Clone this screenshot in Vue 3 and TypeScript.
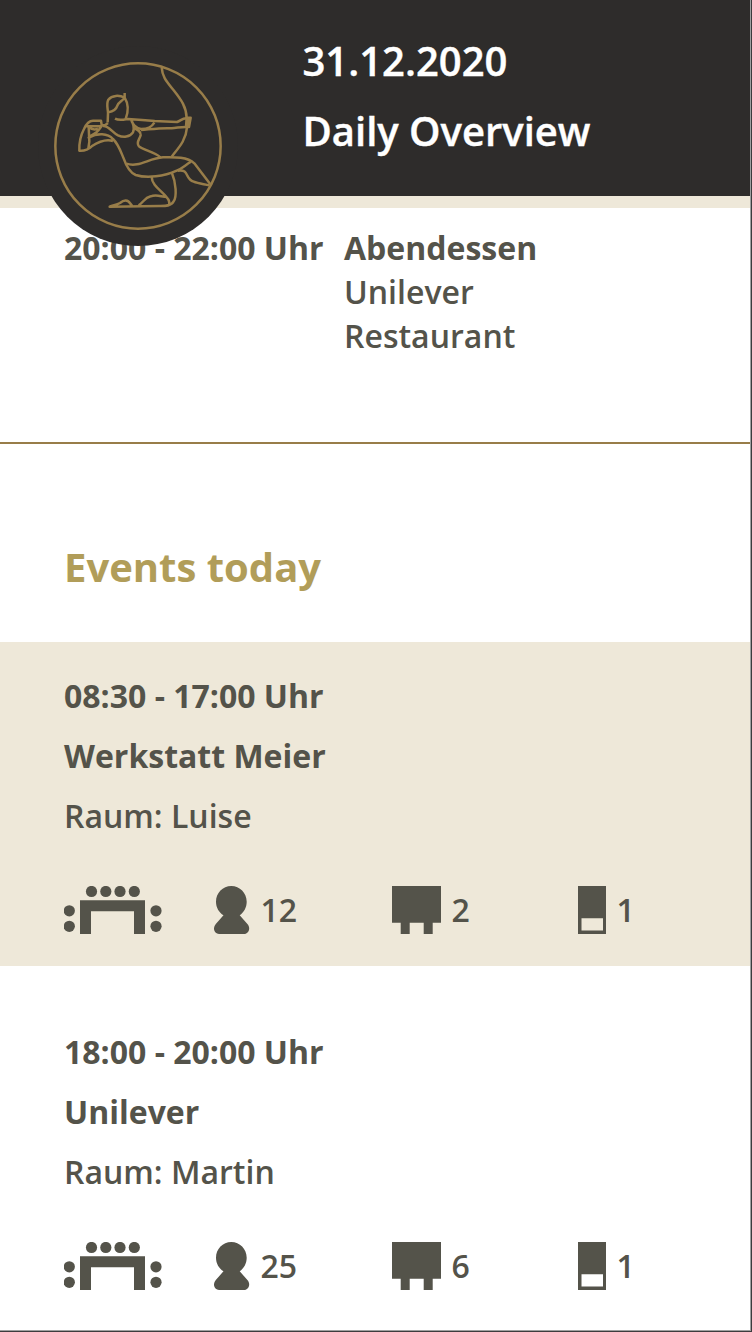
<script setup lang="ts">
interface EventItem {
  time: string
  title: string
  room: string
  people: number
  boards: number
  flipcharts: number
  tinted: boolean
}

const events: EventItem[] = [
  { time: '08:30 - 17:00 Uhr', title: 'Werkstatt Meier', room: 'Luise', people: 12, boards: 2, flipcharts: 1, tinted: true },
  { time: '18:00 - 20:00 Uhr', title: 'Unilever', room: 'Martin', people: 25, boards: 6, flipcharts: 1, tinted: false },
]
</script>

<template>
  <div class="page">
    <header class="header">
      <h1>31.12.2020</h1>
      <h1>Daily Overview</h1>
      <svg class="badge" viewBox="-6 -12 600 600">
        <circle class="disc" cx="294" cy="288" r="300" />
        <g class="lines">
          <circle cx="294" cy="288" r="248" />
          <!-- bow -->
          <path d="M365 52C367 80 378 92 401 121C424 150 439 171 440 204M441 232C438 270 418 291 395 320" />
          <path d="M440 203L452 203L447 231L438 231ZM446 203L442 231" />
          <!-- head -->
          <path d="M254 129L254 143C238 135 216 135 205 149C198 162 204 177 204 190L203 217M254 144C244 155 235 157 232 167C228 181 216 185 205 187M254 143C267 164 265 186 257 207" />
          <!-- arms -->
          <path d="M225 206C238 213 251 209 264 207L306 210L344 213L411 216C424 211 426 205 439 205M273 208C276 222 288 235 303 237C323 237 334 233 343 218M303 240C330 238 364 233 395 235C412 234 426 229 444 231M273 208C282 224 284 235 279 247C269 262 250 263 234 256C215 246 207 227 189 228" />
          <!-- cape -->
          <path d="M204 219L195 226L185 225L183 212L159 212C146 212 138 223 132 237C122 256 117 276 118 302C133 303 146 298 155 289C176 275 198 266 219 273M136 229L185 228L176 240C167 252 159 251 146 263C172 248 203 249 219 267C235 282 242 304 250 323C259 349 269 368 287 375C321 386 373 379 410 362C426 356 436 345 453 335M146 229L148 275L145 295M149 233C155 239 161 240 174 237" />
          <!-- torso and skirt -->
          <path d="M281 234C294 238 303 247 302 255C300 267 286 277 297 289C310 301 342 304 361 322M259 341C298 353 325 325 369 322C407 321 442 321 463 340L511 403" />
          <!-- legs -->
          <path d="M335 381C336 408 365 422 380 442C388 450 389 458 387 466M396 370C408 398 411 440 401 454C394 469 374 468 358 468L209 470C219 465 229 466 240 459C252 449 264 449 271 461L276 467M296 466C311 456 314 443 332 439C351 432 364 441 381 441M413 362C450 357 433 386 461 395C475 401 491 402 508 406" />
        </g>
      </svg>
    </header>

    <section class="meal">
      <div class="meal-time">20:00 - 22:00 Uhr</div>
      <div>
        <div class="strong">Abendessen</div>
        <div>Unilever</div>
        <div>Restaurant</div>
      </div>
    </section>

    <main>
      <h2>Events today</h2>
      <article v-for="event in events" :key="event.time" class="event" :class="{ tinted: event.tinted }">
        <div class="strong">{{ event.time }}</div>
        <div class="strong">{{ event.title }}</div>
        <div>Raum: {{ event.room }}</div>
        <div class="facts">
          <svg class="seating" width="98" height="48" viewBox="0 0 98 48">
            <circle v-for="x in [27.5, 41.8, 56, 70.3]" :key="x" :cx="x" cy="5.5" r="5.6" />
            <circle cx="5.3" cy="24.8" r="5.6" />
            <circle cx="5.3" cy="40.3" r="5.6" />
            <circle cx="92" cy="24.8" r="5.6" />
            <circle cx="92" cy="40.3" r="5.6" />
            <path d="M16 14.3H81V48H70V25.2H27V48H16Z" />
          </svg>
          <div class="fact people">
            <svg width="36" height="48" viewBox="0 0 36 48">
              <path d="M17.3 0C25.8 0 32.7 7 32.7 15.8C32.7 21.5 29.8 26.7 25.7 29.3L33.4 38C37 42 34.8 48 30 48H5C.2 48-1.8 42 1.8 38L9.5 29.3C5 26.7 2 21.5 2 15.8C2 7 8.8 0 17.3 0Z" />
            </svg>
            <span>{{ event.people }}</span>
          </div>
          <div class="fact boards">
            <svg width="49" height="48" viewBox="0 0 49 48">
              <path d="M0 0H49V36.7H40.7V48H31.7V36.7H17.7V48H8.7V36.7H0Z" />
            </svg>
            <span>{{ event.boards }}</span>
          </div>
          <div class="fact">
            <svg width="28" height="48" viewBox="0 0 28 48">
              <path fill-rule="evenodd" d="M0 0H28V48H0ZM3.5 32.3V44.5H25V32.3Z" />
            </svg>
            <span>{{ event.flipcharts }}</span>
          </div>
        </div>
      </article>
    </main>
  </div>
</template>

<style>
body {
  margin: 0;
}
</style>

<style scoped>
.page {
  position: relative;
  box-sizing: border-box;
  width: 752px;
  height: 1332px;
  overflow: hidden;
  background: #fff;
  color: #54534a;
  font: 600 32px/60px "Open Sans", "Noto Sans", sans-serif;
}
.page::after {
  content: "";
  position: absolute;
  inset: 0;
  border: solid #3d3c3e;
  border-width: 0 1px 1px 0;
  box-shadow: inset -1px -1px #a0a0a0;
}
.header {
  position: relative;
  box-sizing: border-box;
  height: 208px;
  padding: 26px 0 0 302.5px;
  border-bottom: 12px solid #eee8d9;
  background: #2e2c2b;
  color: #fff;
}
h1 {
  margin: 0;
  font-size: 40px;
  font-weight: 600;
  line-height: 70px;
  -webkit-text-stroke: 0.4px currentColor;
}
.badge {
  position: absolute;
  left: 38px;
  top: 46px;
  width: 200px;
  height: 200px;
}
.disc {
  fill: #2e2c2b;
}
.lines {
  fill: none;
  stroke: #987d49;
  stroke-width: 7.5;
  stroke-linejoin: round;
}
.meal {
  display: grid;
  grid-template-columns: 280px 1fr;
  box-sizing: border-box;
  height: 236px;
  padding: 18px 0 0 64px;
  border-bottom: 2px solid #987d49;
  line-height: 44px;
}
.meal-time,
.strong {
  font-weight: 700;
}
h2 {
  margin: 0;
  padding: 93px 64px 45px;
  color: #b19d59;
  font-size: 40px;
  font-weight: 700;
  line-height: 60px;
}
.event {
  padding: 24px 64px 32px;
}
.event + .event {
  margin-top: 32px;
}
.tinted {
  background: #eee8d9;
}
.facts {
  display: flex;
  height: 48px;
  margin-top: 40px;
  fill: #54534a;
  line-height: 48px;
}
.facts svg {
  display: block;
  flex: none;
}
.seating {
  margin-right: 52px;
}
.fact {
  display: flex;
  gap: 10.4px;
}
.people {
  width: 178px;
}
.boards {
  width: 186px;
}
</style>
